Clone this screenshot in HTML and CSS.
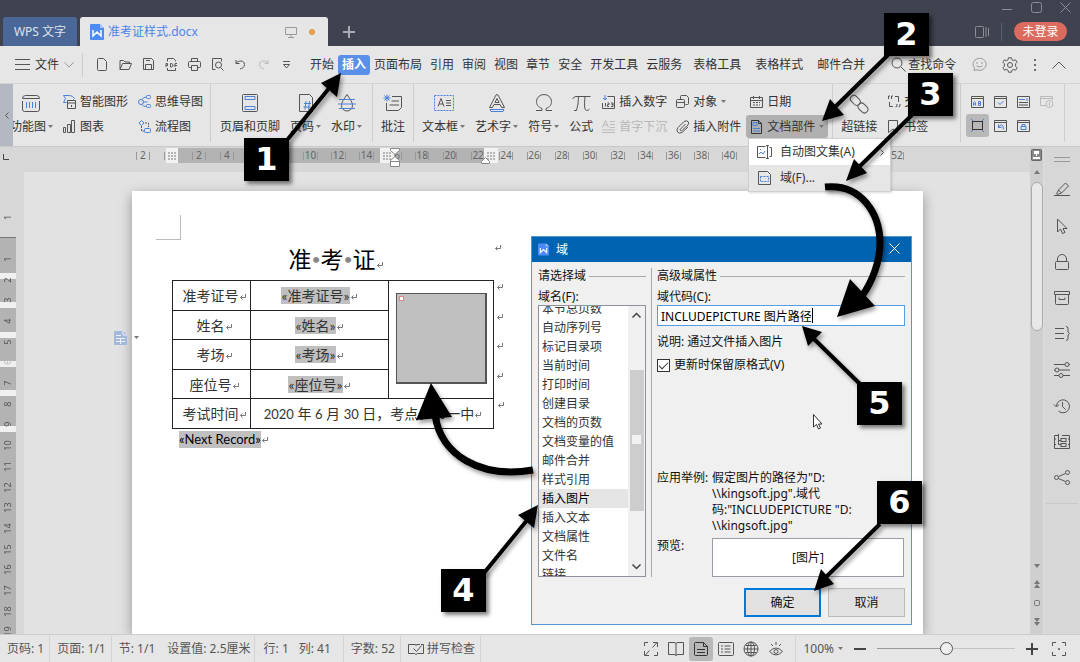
FILE: index.html
```html
<!DOCTYPE html>
<html lang="zh-CN">
<head>
<meta charset="utf-8">
<title>准考证样式.docx - WPS 文字</title>
<link rel="stylesheet" href="styles.css">
</head>
<body>
<svg class="defs" aria-hidden="true">
  <symbol id="caret" viewBox="0 0 5 4"><path d="M0 0h5L2.500 3z" fill="#777"/></symbol>
  <symbol id="ret" viewBox="0 0 8 8"><path d="M6.500 1v3.500H1.500M3.500 2.500l-2 2 2 2" fill="none" stroke="#777"/></symbol>
  <symbol id="wps" viewBox="0 0 14 16"><path d="M1 0h9l4 4v11a1 1 0 0 1-1 1H1a1 1 0 0 1-1-1V1a1 1 0 0 1 1-1z" fill="#4c8bf5"/><path d="M10 0v4h4z" fill="#a9c8fb"/><path d="M3 6v6l4-4 4 4V6" fill="none" stroke="#fff" stroke-width="1.500"/></symbol>
</svg>
<div class="app">
  <header class="titlebar">
    <button class="tab tab-home">WPS 文字</button>
    <div class="tab tab-doc">
      <svg width="14" height="16"><use href="#wps"/></svg>
      <span class="tab-name">准考证样式.docx</span>
      <svg width="12" height="12" class="line soft"><path d="M.5 1.500h11v7H.5zM6 8.500v3M3 11.500h6"/></svg>
      <span class="dot"></span>
    </div>
    <button class="new-tab" aria-label="新建"><svg width="12" height="12" class="line pale"><path d="M6 0v12M0 6h12" stroke-width="2"/></svg></button>
    <div class="title-right">
      <div class="win-buttons">
        <button aria-label="最小化"><svg width="11" height="11" class="line dim"><path d="M0 7.500h10"/></svg></button>
        <button aria-label="最大化"><svg width="11" height="11" class="line dim"><rect x=".5" y=".5" width="10" height="10" rx="2"/></svg></button>
        <button aria-label="关闭"><svg width="11" height="11" class="line dim"><path d="M.5.5l10 10M10.500.5l-10 10"/></svg></button>
      </div>
      <div class="account">
        <svg width="14" height="12" class="line dim"><rect x=".5" y=".5" width="8" height="11" rx="1"/><path d="M11 1v10M13.500 2v8"/></svg>
        <i class="bar"></i>
        <button class="login">未登录</button>
      </div>
    </div>
  </header>

  <div class="menubar">
    <button class="file"><svg width="15" height="11" class="line"><path d="M0 .5h15M0 5.500h15M0 10.500h15"/></svg><span>文件</span><svg width="10" height="6" class="line soft"><path d="M.5.5L5 5 9.500.5"/></svg></button>
    <div class="quick">
      <svg width="13" height="13" class="line"><path d="M1.500 1.500a1 1 0 0 1 1-1h5l3 3v8a1 1 0 0 1-1 1h-7a1 1 0 0 1-1-1z"/></svg>
      <svg width="13" height="13" class="line"><path d="M1 11.500v-9h3.500L6 4h4.500v1.500M1 11.500L3.500 5.500h9l-2.500 6z"/></svg>
      <svg width="13" height="13" class="line"><path d="M1.500.5h8l2 2v9h-10zM3.500 11.500V6.500h6v5M4 2.500h4"/></svg>
      <svg width="13" height="13" class="line"><path d="M2.500 3.500v-3h6l2 2v1M2.500 10v2.500h8V10"/><path d="M1 9V5.500h1.500v2H1M5.500 9V5.500h1L8 6.500V8L6.500 9zM10 9V5.500h2M10 7.500h2"/></svg>
      <svg width="13" height="13" class="line"><path d="M3.500 3.500v-3h6v3M3.500 9.500h-2a1 1 0 0 1-1-1v-4a1 1 0 0 1 1-1h10a1 1 0 0 1 1 1v4a1 1 0 0 1-1 1h-2M3.500 7.500h6v5h-6z"/></svg>
      <svg width="13" height="13" class="line"><path d="M4.500 11.500h-3v-11h9v3M12.500 12.500L9.500 9.500"/><circle cx="7.500" cy="7" r="3"/></svg>
      <svg width="13" height="13" class="line"><path d="M2 2v3.500h3.500M2 5.500C4 2 10.500 2 10.500 6.500c0 3-2.500 4-4.500 4.500"/></svg>
      <svg width="13" height="13" class="line faint"><path d="M11 2v3.500H7.500M11 5.500C9 2 2.500 2 2.500 6.500c0 3 2.500 4 4.500 4.500"/></svg>
      <svg width="13" height="13" class="line"><path d="M3 3.500h7M3.500 6.500h6l-3 3.500z"/></svg>
    </div>
    <nav class="tabs">
      <a href="#">开始</a><a href="#" class="on">插入</a><a href="#">页面布局</a><a href="#">引用</a><a href="#">审阅</a><a href="#">视图</a><a href="#">章节</a><a href="#">安全</a><a href="#">开发工具</a><a href="#">云服务</a><a href="#" class="ctx">表格工具</a><a href="#" class="ctx">表格样式</a><a href="#" class="ctx">邮件合并</a>
    </nav>
    <button class="find"><svg width="15" height="15" class="line"><circle cx="6" cy="6" r="5"/><path d="M9.500 9.500l5 5"/></svg><span>查找命令</span></button>
    <div class="menu-right">
      <svg width="15" height="15" class="line soft"><path d="M2 13.500l.5-2.500A6.500 6 0 1 1 5 12.800z"/><path d="M5 5v2M10 5v2M4.500 9q3 2 6 0"/></svg>
      <svg width="16" height="16" class="line"><circle cx="8" cy="8" r="2.500"/><path d="M6.500.8h3l.5 2 1.500.8 2-.8 1.600 2.500-1.500 1.500v2.400l1.500 1.500-1.600 2.500-2-.8-1.500.8-.5 2h-3l-.5-2-1.500-.8-2 .8L.9 10.700l1.500-1.500V6.800L.9 5.300l1.600-2.500 2 .8L6 2.800z"/></svg>
      <svg width="4" height="14"><g fill="#444"><circle cx="2" cy="2" r="1"/><circle cx="2" cy="7" r="1"/><circle cx="2" cy="12" r="1"/></g></svg>
      <svg width="14" height="8" class="line"><path d="M.5 7.500L7 1l6.500 6.500"/></svg>
    </div>
  </div>

  <div class="ribbon">
    <button class="scroller" aria-label="向左滚动"><svg width="4" height="7" class="line"><path d="M3.500.5l-3 3 3 3"/></svg></button>
    <div class="group first">
      <button class="big clip"><svg width="20" height="18" class="line"><path d="M1.500 4.500q0-3 3-3h11q3 0 3 3zM1.500 7v8q0 2.500 2 2.500h13q2 0 2-2.500V7"/><path d="M5.500 8v6M8.500 8v6M11.500 8v6M14.500 8v6" class="blue"/></svg><span>功能图<svg width="5" height="4"><use href="#caret"/></svg></span></button>
      <div class="stack">
        <button><svg width="13" height="14" class="line"><path d="M.5.5h6q3 0 5 3l-1 1M.5.5l2 3-2 4h3" class="blue"/><path d="M4.500 5.500h8v8h-8zM4.500 8h8M8.500 10v2"/></svg>智能图形</button>
        <button><svg width="13" height="13" class="line"><path d="M.5 7.500h2v5h-2zM4.500 4.500h3v8h-3zM8.500.5h3v12h-3z"/></svg>图表</button>
      </div>
      <div class="stack">
        <button><svg width="13" height="13" class="line"><g class="blue"><circle cx="3" cy="7" r="2.500"/><rect x="8.500" y=".5" width="4" height="3" rx="1"/><rect x="8.500" y="9.500" width="4" height="3" rx="1"/><path d="M4 4.500q1-2.500 4.500-2.500M5.500 7h4M4 9.500q1 2 4.500 2"/></g></svg>思维导图</button>
        <button><svg width="13" height="13" class="line"><path d="M3.500.5l2.500 2.500-2.500 2.500L1 3z" class="blue"/><path d="M7 3h3.500v4M3.500 6v5H6" stroke-dasharray="2 1"/><rect x="6.500" y="8.500" width="6" height="4" rx="1" class="blue"/></svg>流程图</button>
      </div>
    </div>
    <div class="group">
      <button class="big"><svg width="18" height="18" class="line"><rect x="1.500" y=".5" width="15" height="17" rx="1"/><path d="M4 2.500h10v3H4zM4 12.500h10v3H4z" class="blue"/></svg><span>页眉和页脚</span></button>
      <button class="big"><svg width="18" height="18" class="line"><path d="M2.500.5h10l3 3v14h-13z"/><path d="M7 9.500h7M6.500 13h7M9 7l-1 8.500M12.500 7l-1 8.500" class="blue"/></svg><span>页码<svg width="5" height="4"><use href="#caret"/></svg></span></button>
      <button class="big"><svg width="18" height="18" class="line"><path d="M9 .5C6 5 3.500 8 3.500 11.500a5.500 5.500 0 0 0 11 0C14.500 8 12 5 9 .5z"/><path d="M1 5.500h16M0 10h18M1 14.500h16" class="blue"/></svg><span>水印<svg width="5" height="4"><use href="#caret"/></svg></span></button>
    </div>
    <div class="group one">
      <button class="big"><svg width="20" height="18" class="line"><path d="M9 2.500h9.500v11l-3 3h-12V9M8.500 7H16M6.500 11H16"/><path d="M4 .5v7M.5 4h7M1.500 1.500l5 5M6.500 1.500l-5 5" class="blue"/></svg><span>批注</span></button>
    </div>
    <div class="group text">
      <div class="set">
        <button class="big"><svg width="20" height="18" class="line"><rect x=".5" y="1.500" width="19" height="15" class="blue" stroke-dasharray="2 1"/><path d="M4 12.500l3-8 3 8M5 10h4M12 6.500h5M12 9h5M12 11.500h5"/></svg><span>文本框<svg width="5" height="4"><use href="#caret"/></svg></span></button>
        <button class="big"><svg width="18" height="18" class="line"><path d="M1.500 13.500L8 1q1-1 2 0l6.500 12.500h-3l-1.500-3H6l-1.500 3zM7 8.500h4L9 4.500z"/><path d="M2 15.500h14l-1 2H3z" class="blue"/></svg><span>艺术字<svg width="5" height="4"><use href="#caret"/></svg></span></button>
        <button class="big"><svg width="18" height="18" class="line"><path d="M1 16.500h6v-2C3 13 1.500 10.500 1.500 7.500a7.500 7 0 0 1 15 0c0 3-1.500 5.500-5.500 7v2h6"/></svg><span>符号<svg width="5" height="4"><use href="#caret"/></svg></span></button>
        <button class="big"><svg width="19" height="18" class="line"><path d="M.5 5Q2 2.500 4 2.500h14.500M6.500 2.500q0 8-2 14H2M13 2.500q-1.500 14 1.500 14 2 0 3-1.500"/></svg><span>公式</span></button>
      </div>
      <div class="stack">
        <button><svg width="13" height="14" class="line"><path d="M5.500 1.500h7v12H.5V8"/><path d="M3 0v5M1 3l2 2 2-2" class="blue"/><path d="M3.500 8v3.500M5.500 8H7v1.500H5.500V11.500H7M9 8h2v3.500H9M9.500 9.500H11"/></svg>插入数字</button>
        <button disabled><svg width="13" height="13" class="line faint"><path d="M.5 7.500l3-7 3 7M1.500 5h4M8 1.500h5M8 4.500h5M8 7.500h5M0 10h13M0 12.500h13"/></svg>首字下沉</button>
      </div>
      <div class="stack">
        <button><svg width="13" height="13" class="line"><path d="M4.500 5V1.500a1 1 0 0 1 1-1h5l2 2v6a1 1 0 0 1-1 1H9.500"/><rect x=".5" y="4.500" width="8" height="8" rx="1"/><path d="M.5 7.500h8"/></svg>对象<svg class="end" width="5" height="4"><use href="#caret"/></svg></button>
        <button><svg width="13" height="13" class="line"><path d="M9.500 4L4.500 9q-1 1 0 1.500t2-.5L12 5q1.500-2 0-3.500t-4 0L2 7.500q-2 2.500-.5 4.500t4.500.5L12 7"/></svg>插入附件</button>
      </div>
      <div class="stack">
        <button><svg width="13" height="12" class="line"><path d="M.5 1.500h12v10H.5zM.5 4.500h12M3.500 0v3M9.500 0v3"/><path d="M3 6.500h7M3 9h7" stroke-dasharray="2 1"/></svg>日期</button>
        <button class="pressed"><svg width="13" height="14" class="line dark"><path d="M1.500.5h7l3 3v10h-10z"/><path d="M8.500.5v3h3"/><path d="M3 2.500h4v3H3zM3 8.500h7M3 11h7" class="blue"/></svg>文档部件<svg class="end" width="5" height="4"><use href="#caret"/></svg></button>
      </div>
    </div>
    <div class="group one">
      <button class="big"><svg width="20" height="20" class="line"><rect x="-5" y="-3.500" width="11" height="7" rx="3.500" transform="translate(6 6) rotate(45)"/><rect x="-5.500" y="-3.500" width="11" height="7" rx="3.500" transform="translate(14 14) rotate(45)"/></svg><span>超链接</span></button>
      <div class="stack">
        <button><svg width="13" height="13" class="line"><path d="M1.500 4V1H3M4.500 4V1H6M8 1.500h3.500V7M2.500 7v4.500H6M8.500 12q2 0 1.500-3M11.500 12q2 0 1.500-3"/></svg>交叉引用</button>
        <button><svg width="13" height="13" class="line"><path d="M1.500.5h9v12L6 9l-4.500 3.500z"/></svg>书签</button>
      </div>
    </div>
    <div class="group controls">
      <button aria-label="文字型窗体域"><svg width="13" height="12" class="line"><path d="M.5.5h12v11H.5zM.5 2.500h12"/><path d="M2.500 9.500v-3l1-1 1 1v3M2.500 8h2M7.500 5.500h2v4h-2zM7.500 7.500h2" class="blue"/></svg></button>
      <button aria-label="复选框窗体域"><svg width="13" height="12" class="line"><path d="M.5.5h12v11H.5zM.5 2.500h12"/><path d="M4 6.500l2 2 3.500-3.500" class="blue"/></svg></button>
      <button aria-label="下拉型窗体域"><svg width="13" height="12" class="line"><path d="M.5.5h12v11H.5z"/><path d="M2 3.500h6M10 2v3" class="blue"/><path d="M2 6.500h9M2 9h9"/></svg></button>
      <button aria-label="窗体域选项"><svg width="13" height="12" class="line faint"><path d="M12.500 4V.5H.5v9H6M.5 2.500h12"/><circle cx="9.500" cy="8" r="3.500"/><path d="M9.500 6v4"/></svg></button>
      <button class="sel" aria-label="窗体域底纹"><svg width="13" height="13" class="line dark"><rect x="1.500" y="2.500" width="10" height="8"/><path d="M0 0l2 2M13 0l-2 2M0 13l2-2M13 13l-2-2" class="blue"/></svg></button>
      <button aria-label="重新设置窗体域"><svg width="13" height="12" class="line"><path d="M.5.5h12v11H.5zM.5 2.500h12"/><path d="M4.500 4.500v3h3M4.500 7.500q1-2.500 3-2.500t2 4.500" class="blue"/></svg></button>
      <button aria-label="保护窗体"><svg width="13" height="12" class="line"><path d="M.5.5h12v11H.5zM.5 2.500h12"/><path d="M4 6.500h5v3H4zM5 6V4.500h3V6" class="blue"/></svg></button>
    </div>
  </div>

  <main class="work">
    <div class="canvas-col">
      <div class="hruler">
        <svg class="corner" width="7" height="7"><path d="M1.500 0v5.500H7" fill="none" stroke="#444"/></svg>
        <div class="hscale"><span>2</span><span></span><span>2</span><span>4</span><span></span><span></span><span>10</span><span>12</span><span>14</span><span>16</span><span>18</span><span>20</span><span>22</span><span>24</span><span>26</span><span>28</span><span>30</span><span>32</span><span>34</span><span>36</span><span>38</span><span>40</span><span></span><span></span><span></span><span></span><span></span><span>52</span></div>
        <svg class="markers" width="340" height="20">
          <path d="M0 0h12v15H0zM214 0h14v15h-14zM318 0h14v15h-14z" fill="#f2f2f2"/>
          <path d="M2 5h8M2 8h8M2 11h8M217 5h8M217 8h8M217 11h8M321 5h8M321 8h8M321 11h8" stroke="#777" stroke-dasharray="2 1"/>
          <path d="M224.500.5h9v2l-4.500 4-4.500-4zM224.500 12.500l4.500-4 4.500 4v6h-9zM224.500 13.500h9M315.500 15.500v-2l4-4 4 4v2z" fill="#fff" stroke="#888"/>
        </svg>
      </div>
      <div class="stage">
        <div class="vruler"><span class="v0">1</span><div class="vscale"><span>1</span><span>2</span><span>3</span><span>4</span><span>5</span><span class="hid">6</span><span>7</span><span>8</span><span>9</span><span>10</span><span>11</span><span>12</span><span>13</span><span>14</span><span>15</span><span>16</span><span>17</span><span>18</span><span>19</span></div></div>
        <div class="desk">
          <div class="para-tool"><svg width="13" height="14"><path d="M0 0h9l4 4v10H0z" fill="#a3b9dc"/><path d="M9 0v4h4M2 4.500h5M2 7.500h9M2 10.500h9M6.500 7v6" fill="none" stroke="#eef"/></svg><svg width="5" height="4"><use href="#caret"/></svg></div>
          <article class="page">
            <i class="crop"></i>
            <div class="title-row"><h1>准<i>•</i>考<i>•</i>证<svg width="8" height="8"><use href="#ret"/></svg></h1><svg width="8" height="8"><use href="#ret"/></svg></div>
            <table class="ticket">
              <colgroup><col class="c1"><col class="c2"><col class="c3"><col class="c4"></colgroup>
              <tr><th>准考证号<svg width="8" height="8"><use href="#ret"/></svg></th><td><mark>«准考证号»</mark><svg width="8" height="8"><use href="#ret"/></svg></td><td rowspan="4" class="photo-cell"><div class="photo"><i></i></div></td><td class="eol"><svg width="8" height="8"><use href="#ret"/></svg></td></tr>
              <tr><th>姓名<svg width="8" height="8"><use href="#ret"/></svg></th><td><mark>«姓名»</mark><svg width="8" height="8"><use href="#ret"/></svg></td><td class="eol"><svg width="8" height="8"><use href="#ret"/></svg></td></tr>
              <tr><th>考场<svg width="8" height="8"><use href="#ret"/></svg></th><td><mark>«考场»</mark><svg width="8" height="8"><use href="#ret"/></svg></td><td class="eol"><svg width="8" height="8"><use href="#ret"/></svg></td></tr>
              <tr><th>座位号<svg width="8" height="8"><use href="#ret"/></svg></th><td><mark>«座位号»</mark><svg width="8" height="8"><use href="#ret"/></svg></td><td class="eol"><svg width="8" height="8"><use href="#ret"/></svg></td></tr>
              <tr><th>考试时间<svg width="8" height="8"><use href="#ret"/></svg></th><td colspan="2" class="when"><b>2020</b> 年 <b>6</b> 月 <b>30</b> 日，考点：市一中<svg width="8" height="8"><use href="#ret"/></svg></td><td class="eol"><svg width="8" height="8"><use href="#ret"/></svg></td></tr>
            </table>
            <p class="next"><mark>«Next Record»</mark><svg width="8" height="8"><use href="#ret"/></svg></p>
          </article>
        </div>
      </div>
    </div>
    <div class="vscroll">
      <svg width="11" height="12"><rect x=".5" y=".5" width="10" height="11" rx="1" fill="#888" stroke="#666"/><path d="M3 2h5v3H3zM5 5h1v2H5zM2 8h7v2H2z" fill="#fff"/></svg>
      <svg width="6" height="4" class="up"><path d="M0 4l3-4 3 4z" fill="#777"/></svg>
      <div class="thumb"></div>
      <div class="jumps">
        <svg width="6" height="4"><path d="M0 0l3 4 3-4z" fill="#777"/></svg>
        <svg width="6" height="8"><path d="M0 4l3-4 3 4zM0 8l3-4 3 4z" fill="#777"/></svg>
        <svg width="6" height="6"><rect x=".5" y=".5" width="5" height="5" rx="1" fill="none" stroke="#777"/></svg>
        <svg width="6" height="8"><path d="M0 0l3 4 3-4zM0 4l3 4 3-4z" fill="#777"/></svg>
      </div>
    </div>
    <aside class="side">
      <svg width="16" height="5" class="line soft"><path d="M0 .5h16M0 4.500h16"/></svg>
      <div class="side-tools">
        <svg width="16" height="16" class="line"><path d="M0 13.500h16M2.500 12l2-4 7-7 3 3-7 7-4 1.500zM4.500 8l3 3"/></svg>
        <svg width="16" height="16" class="line"><path d="M3.500 1v13l3-3 2 4.500 2.500-1-2-4h4z"/></svg>
        <svg width="16" height="16" class="line"><rect x="1.500" y="7.500" width="13" height="8" rx="1"/><path d="M3.500 7.500V5a4.500 4.500 0 0 1 9 0v2.500"/></svg>
        <svg width="16" height="16" class="line"><path d="M.5 1.500h15v3H.5zM1.500 4.500v9q0 1 1 1h11q1 0 1-1v-9M5 7.500v2h6v-2"/></svg>
        <svg width="16" height="16" class="line"><path d="M1 2.500h9M1 7.500h9M1 12.500h9M12 .5q2 0 2 2V6l1.500 1.500L14 9v3.500q0 2-2 2"/></svg>
        <svg width="16" height="16" class="line"><path d="M0 2.500h11M15 2.500h1M0 8h1M5 8h11M0 13.500h5M9 13.500h7"/><circle cx="13" cy="2.500" r="2"/><circle cx="3" cy="8" r="2"/><circle cx="7" cy="13.500" r="2"/></svg>
        <svg width="16" height="16" class="line"><path d="M2.500 8a6.500 6.500 0 1 1 2 5M0 6.500l2.500 2.500L5 6.500M8.500 4v4.500l3 3"/></svg>
        <svg width="16" height="16" class="line"><path d="M4 1.500H.5v13h15v-13H8M4.500 0v10.500H7M4.500 6.500H7M0 5h2M0 10.500h2M14 5h2M14 10.500h2"/><rect x="7" y="4.500" width="5" height="3"/><rect x="7" y="9.500" width="5" height="3"/></svg>
        <svg width="16" height="16" class="line"><circle cx="2.500" cy="7.500" r="2"/><circle cx="13.500" cy="2.500" r="2"/><circle cx="13.500" cy="12.500" r="2"/><path d="M4.500 6.500l7-3M4.500 8.500l7 3"/></svg>
      </div>
    </aside>
  </main>

  <footer class="status">
    <span>页码: 1</span><span class="sep">页面: 1/1</span><span class="sep">节: 1/1</span><span class="wide">设置值: 2.5厘米</span><span class="sep">行: 1</span><span class="col">列: 41</span><span class="sep far">字数: 52</span><span class="sep"><svg width="16" height="12" class="line"><path d="M12 1.500H9Q8 1.500 8 2.500 8 1.500 7 1.500H.5v9H6.500L8 11.500l1.500-1h6V1.500H13M5.500 5.500l3 3 5-6"/></svg>拼写检查</span><i class="sep"></i>
    <div class="views">
      <button aria-label="全屏"><svg width="16" height="16" class="line"><path d="M1.500 5V1.500H5M10 1.500h4.500V6M14.500 11v3.500H11M6 14.500H1.500V10M9.500 6.500l4.500-5M6.500 9.500l-4.500 5"/></svg></button>
      <button aria-label="阅读版式"><svg width="16" height="16" class="line"><path d="M8 2.500v12M8 2.500q-1-1-2-1H.5v12H6q1 0 2 1 1-1 2-1h5.500v-12H10q-1 0-2 1z"/></svg></button>
      <button class="sel" aria-label="页面视图"><svg width="16" height="16" class="line dark"><path d="M1.500 2.500q0-1 1-1h8l4 4v8q0 1-1 1h-11q-1 0-1-1zM10.500 1.500v4h4M4 8.500h8M4 11.500h8"/></svg></button>
      <button aria-label="大纲"><svg width="16" height="16" class="line"><rect x=".5" y="1.500" width="15" height="13" rx="1"/><path d="M3 5h2M3 8h2M3 11h2M6.500 5h6M6.500 8h6M6.500 11h6"/></svg></button>
      <button aria-label="Web 版式"><svg width="16" height="16" class="line"><circle cx="8" cy="8" r="7"/><ellipse cx="8" cy="8" rx="3.500" ry="7"/><path d="M8 1v14M1 8h14M2.500 4.500h11M2.500 11.500h11"/></svg></button>
      <button aria-label="护眼模式"><svg width="16" height="16" class="line"><path d="M1.500 10.500Q8 3.500 14.500 10.500 8 17.500 1.500 10.500zM8 1v3M3 3l2 2M13 3l-2 2"/><circle cx="8" cy="10.500" r="2"/></svg></button>
    </div>
    <button class="zoomv sep">100%<svg width="5" height="4"><use href="#caret"/></svg></button>
    <button class="pm" aria-label="缩小"><svg width="12" height="12"><path d="M0 6h12" stroke="#444" stroke-width="2"/></svg></button>
    <input type="range" class="zoom" min="0" max="100" value="50" aria-label="缩放">
    <button class="pm" aria-label="放大"><svg width="12" height="12"><path d="M0 6h12M6 0v12" stroke="#444" stroke-width="2"/></svg></button>
    <button class="pm last" aria-label="最佳显示比例"><svg width="14" height="14" class="line"><path d="M.5 4V.5H4M10 .5h3.500V4M13.500 10v3.500H10M4 13.500H.5V10M6 7h2M7 6v2"/></svg></button>
  </footer>

  <div class="dropdown">
    <button><svg width="15" height="14" class="line"><path d="M8.500 1.500h-8v11h8M10.500.5v13M9 .5h3M9 13.500h3M12.500 2.500h2v9h-2"/><path d="M2 9l2-2 2 2 2-3M3 4.500h1" class="blue"/></svg><span>自动图文集(A)</span><svg width="4" height="7" class="line"><path d="M.5.5l3 3-3 3"/></svg></button>
    <button class="hover"><svg width="15" height="14" class="line"><path d="M1.500.5h9l3 3v10h-12z"/><path d="M3.500 5.500h8v5h-8z" class="blue" stroke-dasharray="2 1"/></svg><span>域(F)...</span></button>
  </div>

  <section class="dialog" role="dialog" aria-label="域">
    <header><svg width="11" height="13" viewBox="0 0 14 16"><use href="#wps"/></svg><span>域</span><button aria-label="关闭"><svg width="11" height="11" fill="none" stroke="#fff"><path d="M.5.5l10 10M10.500.5l-10 10"/></svg></button></header>
    <div class="dlg-body">
      <div class="dlg-left">
        <div class="legend">请选择域</div>
        <div class="lbl" id="names">域名(F):</div>
        <div class="listbox">
          <ul role="listbox" aria-labelledby="names">
            <li role="option">本节总页数</li><li role="option">自动序列号</li><li role="option">标记目录项</li><li role="option">当前时间</li><li role="option">打印时间</li><li role="option">创建目录</li><li role="option">文档的页数</li><li role="option">文档变量的值</li><li role="option">邮件合并</li><li role="option">样式引用</li><li role="option" aria-selected="true" class="on">插入图片</li><li role="option">插入文本</li><li role="option">文档属性</li><li role="option">文件名</li><li role="option">链接</li>
          </ul>
          <div class="lb-scroll">
            <svg width="9" height="6"><path d="M.5 5.500l4-4 4 4" fill="none" stroke="#444" stroke-width="1.500"/></svg>
            <div class="lb-thumb"><i></i></div>
            <svg width="9" height="6"><path d="M.5.5l4 4 4-4" fill="none" stroke="#444" stroke-width="1.500"/></svg>
          </div>
        </div>
      </div>
      <div class="dlg-right">
        <div class="legend">高级域属性</div>
        <label class="lbl" for="code">域代码(C):</label>
        <div class="code-field"><input id="code" type="text" value="INCLUDEPICTURE 图片路径"><i class="text-caret"></i></div>
        <p class="note">说明: 通过文件插入图片</p>
        <label class="check"><input type="checkbox" checked><span>更新时保留原格式(V)</span></label>
        <dl>
          <dt>应用举例:</dt><dd>假定图片的路径为"D:<br>\\kingsoft.jpg".域代<br>码:"INCLUDEPICTURE "D:<br>\\kingsoft.jpg"</dd>
          <dt>预览:</dt><dd class="preview">[图片]</dd>
        </dl>
      </div>
    </div>
    <div class="actions"><button class="ok">确定</button><button>取消</button></div>
  </section>

  <svg class="notes" viewBox="0 0 1080 662" width="1080" height="662" aria-hidden="true">
    <path d="M813.500 414.500v12.500l3-2.500 2 4.500 2-1-2-4h3.500z" fill="#fff" stroke="#333"/>
    <g class="shade">
      <g stroke="#000" stroke-width="4" fill="none">
        <path d="M288 139L330 87M888 55L834 108M912 115L858 168M484 573L528 519M860 384L812 337M880 524L825 578"/>
        <path d="M825 187C862 183 880 215 880 243 880 262 872 282 862 296" stroke-width="7"/>
        <path d="M533 470C480 479 441 455 435 415" stroke-width="7"/>
      </g>
      <path d="M341 73L321 83 337 97zM822 121L830 99 844 115zM846 181L854 159 867 173zM538 505L518 515 534 528zM802 326L822 332 808 346zM814 591L821 569 834 584zM837 317L850 279 875 306zM431 383L416 420 452 417z"/>
    </g>
  </svg>
  <b class="badge b1">1</b><b class="badge b2">2</b><b class="badge b3">3</b><b class="badge b4">4</b><b class="badge b5">5</b><b class="badge b6">6</b>
</div>
</body>
</html>
```
FILE: styles.css
```css
* { box-sizing: border-box; }
body { margin: 0; font: 12px/16px "Noto Sans", "Noto Sans CJK SC", sans-serif; color: #333; background: #e6e6e6; }
button { font: inherit; color: inherit; background: none; border: 0; padding: 0; white-space: nowrap; }
input { font: inherit; }
svg { flex: none; overflow: visible; }
.defs { position: absolute; width: 0; height: 0; }
.line { fill: none; stroke: #555; }
.line .blue { stroke: #4a80d8; }
.dark { stroke: #333; }
.soft { stroke: #999; }
.faint { stroke: #bbb; }
.pale { stroke: #a8abb3; }
.dim { stroke: #8a8e99; }

.app { position: relative; display: flex; flex-direction: column; height: 100vh; min-width: 1080px; overflow: hidden; }

/* title bar */
.titlebar { display: flex; align-items: flex-end; height: 46px; padding-left: 3px; background: #3f434f; flex: none; }
.tab { height: 29px; border-radius: 3px 3px 0 0; display: flex; align-items: center; }
.tab-home { width: 74px; justify-content: center; background: #4a6797; color: #dde3ee; }
.tab-doc { width: 248px; margin-left: 3px; padding: 0 13px 0 10px; gap: 4px; background: #e6e6e6; color: #4c84e8; }
.tab-name { flex: 1; }
.dot { width: 6px; height: 6px; margin-left: 8px; border-radius: 50%; background: #ea9a4c; }
.new-tab { width: 42px; height: 29px; display: grid; place-items: center; }
.title-right { margin-left: auto; display: flex; flex-direction: column; align-items: flex-end; }
.win-buttons { display: flex; gap: 18px; padding-right: 9px; height: 17px; }
.account { display: flex; align-items: center; height: 29px; padding: 0 13px 0 0; }
.bar { width: 1px; height: 18px; margin: 0 12px; background: #595e6b; }
.login { width: 53px; height: 19px; border-radius: 10px; background: #db6b5e; color: #fff; line-height: 18px; }

/* menu bar */
.menubar { display: flex; align-items: center; height: 38px; flex: none; background: #e6e6e6; border-bottom: 1px solid #d4d4d4; }
.file { display: flex; align-items: center; gap: 7px; height: 24px; padding: 0 8px 0 15px; border-right: 1px solid #ccc; }
.file span { margin: 0 -2px; }
.quick { display: flex; gap: 10px; padding: 0 13px 0 13px; }
.tabs { display: flex; align-items: center; }
.tabs a { padding: 2px 4px; border-radius: 3px; color: inherit; text-decoration: none; white-space: nowrap; }
.tabs a.ctx { padding: 2px 7px; }
.tabs a.on { background: #5b90ea; color: #fff; font-weight: bold; }
.find { display: flex; align-items: center; gap: 2px; margin-left: 19px; }
.menu-right { display: flex; align-items: center; gap: 15px; margin-left: auto; padding-right: 14px; }

/* ribbon */
.ribbon { display: flex; height: 62px; flex: none; background: #e6e6e6; }
.scroller { width: 13px; background: #b3b8c3; }
.group { display: flex; gap: 10px; padding: 10px 10px 0 9px; margin-bottom: 4px; border-right: 1px solid #cdcdcd; }
.group.first { padding: 10px 7px 0 0; }
.group.one { padding: 10px 8px 0; }
.group.text { gap: 9px; padding: 10px 8px 0 8px; }
.set { display: flex; gap: 10px; }
.big { display: flex; flex-direction: column; align-items: center; justify-content: space-between; height: 41px; }
.big > svg { height: 19px; }
.big span { display: flex; align-items: center; gap: 2px; }
.big.clip { width: 40px; overflow: hidden; align-items: flex-end; }
.big.clip > svg { margin-right: 12px; }
.stack { display: flex; flex-direction: column; gap: 1px; margin-top: -4px; }
.stack button { display: flex; align-items: center; gap: 4px; height: 23px; }
.stack button + button { margin-top: 1px; }
.stack button:disabled { color: #b8b8b8; }
.stack .pressed { margin-left: -4px; margin-right: -4px; padding: 0 4px; background: #b0b0b0; border-radius: 3px; }
.group.controls { display: grid; grid-template-columns: repeat(4, 23px); grid-template-rows: 23px 23px; gap: 1px 0; padding: 6px 6px 0 5px; }
.controls button { display: grid; place-items: center; border-radius: 3px; }
.controls .sel, .views .sel { background: #b8b8b8; }

/* workspace */
.work { display: flex; flex: 1; min-height: 0; border-top: 1px solid #c8c8c8; background: #d7d7d7; }
.canvas-col { flex: 1; min-width: 0; display: flex; flex-direction: column; }
.hruler { position: relative; height: 25px; padding: 1px 0 9px 129px; color: #666; font-size: 10px; line-height: 15px; flex: none; }
.hscale { width: 782px; display: grid; grid-template-columns: repeat(28, 1fr); text-align: center; background: linear-gradient(90deg, transparent 49px, #b3b3b3 49px 355px, transparent 355px); }
.hscale span { height: 15px; background: linear-gradient(#999, #999) 25% 60%/1px 8px no-repeat, linear-gradient(#999, #999) 75% 60%/1px 8px no-repeat; }
.markers { position: absolute; left: 166px; top: 1px; }
.corner { position: absolute; left: 2px; top: 7px; }
.stage { flex: 1; min-height: 0; display: flex; }
.vruler { width: 16px; display: flex; flex-direction: column; align-items: center; overflow: hidden; color: #555; font-size: 9px; line-height: 16px; background: linear-gradient(transparent 65px, #777 65px 66px, #b3b3b3 66px 101px, #f0f0f0 101px 107px, #b3b3b3 107px 130px, #f0f0f0 130px 136px, #b3b3b3 136px 160px, #f0f0f0 160px 166px, #b3b3b3 166px 189px, #f0f0f0 189px 195px, #b3b3b3 195px 218px, #f0f0f0 218px 224px, #b3b3b3 224px 254px, #f0f0f0 254px 260px, #b3b3b3 260px); }
.vruler span { writing-mode: vertical-rl; transform: rotate(180deg); text-align: center; }
.v0 { height: 21px; margin: 35px 0 21px; flex: none; }
.vscale { display: grid; grid-template-rows: repeat(19, 1fr); height: 393px; flex: none; }
.hid { color: #bbb; }
.desk { position: relative; flex: 1; margin-left: 8px; padding: 19px 107px 0 108px; background: #e2e2e2; overflow: hidden; }
.page { height: 100%; padding: 24px 24px 0; background: #fff; box-shadow: 0 4px 12px rgba(0, 0, 0, .35); }
.para-tool { position: absolute; left: 90px; top: 159px; display: flex; align-items: center; gap: 7px; }
.crop { display: block; width: 25px; height: 25px; border: solid #bbb; border-width: 0 1px 1px 0; }
.title-row { display: flex; width: 330px; height: 40px; margin: 0 0 0 16px; padding-top: 4px; }
h1 { flex: 1; margin: 0; padding: 0 0 5px 6px; display: flex; justify-content: center; align-items: flex-end; font: 23px/32px "Lato", "Noto Sans CJK SC", sans-serif; color: #000; }
h1 i { width: 9px; font-size: 16px; line-height: 32px; font-style: normal; color: #888; text-align: center; }
h1 svg { margin-bottom: 6px; }
.ticket { width: 332px; margin-left: 16px; table-layout: fixed; border-collapse: collapse; font: 14px/17px "Lato", "Noto Sans CJK SC", sans-serif; color: #333; }
.ticket tr { height: 29px; }
.ticket tr:nth-child(odd) { height: 30px; }
.c1 { width: 78px; } .c2 { width: 138px; } .c3 { width: 105px; } .c4 { width: 11px; }
.ticket th, .ticket td { padding: 0; border: 1px solid #222; font-weight: 400; text-align: center; white-space: nowrap; }
.ticket th { padding-left: 6px; }
.ticket td.eol { border: 0; text-align: right; line-height: 10px; vertical-align: top; }
.ticket td.when { padding-left: 2px; }
.when b { font-size: 13px; font-weight: 400; }
mark { display: inline-block; background: #c0c0c0; color: inherit; }
.photo { width: 91px; height: 91px; margin: -2px auto 0; padding: 2px; background: #c0c0c0; border: solid #555; border-width: 1px 2px 2px 1px; }
.photo i { display: block; width: 5px; height: 5px; background: #fff; border: 1px solid #d88; }
.next { margin: 2px 0 0 23px; font: 13px/17px "Lato", sans-serif; color: #000; }

.vscroll { width: 14px; display: flex; flex-direction: column; align-items: center; padding: 2px 0 8px; background: #cfcfcf; border-right: 1px solid #dedede; }
.up { margin: 9px 0 8px; }
.thumb { width: 12px; height: 149px; border: 1px solid #aaa; border-radius: 6px; background: #e8e8e8; }
.jumps { margin-top: auto; display: flex; flex-direction: column; align-items: center; gap: 12px; }
.side { width: 36px; display: flex; flex-direction: column; align-items: center; padding-top: 10px; }
.side-tools { display: flex; flex-direction: column; align-items: center; gap: 20px; margin-top: 20px; padding: 0 8px 17px; border-bottom: 1px solid #c8c8c8; }

/* status bar */
.status { display: flex; align-items: center; height: 28px; flex: none; padding-left: 7px; color: #555; background: #e6e6e6; border-top: 1px solid #ccc; }
.status > span { display: flex; align-items: center; gap: 3px; height: 26px; margin-right: 5px; white-space: nowrap; }
.status > .sep { border-left: 1px solid #d4d4d4; padding-left: 7px; height: 26px; }
.status > .wide { margin: 0 3px 0 7px; }
.status > .wide + span { padding-left: 9px; }
.status > .col { padding-left: 5px; }
.status > .far { margin-left: 7px; }
.views { display: flex; gap: 1px; margin-left: auto; margin-right: 7px; }
.views button { display: grid; place-items: center; width: 24px; height: 24px; border-radius: 3px; }
.zoomv { display: flex; align-items: center; gap: 4px; }
.pm { display: grid; place-items: center; margin-left: 11px; }
.pm.last { margin: 0 14px 0 14px; }
.zoom { appearance: none; width: 138px; height: 14px; margin: 0 0 0 11px; background: linear-gradient(90deg, #999 50%, #c4c4c4 50%) center/100% 1px no-repeat; }
.zoom::-webkit-slider-thumb { appearance: none; width: 13px; height: 13px; border: 1px solid #555; border-radius: 50%; background: #eee; }

/* drop-down menu */
.dropdown { position: absolute; left: 748px; top: 138px; width: 143px; border: 1px solid #d0d0d0; background: #fff; box-shadow: 1px 1px 2px rgba(0, 0, 0, .15); }
.dropdown button { display: flex; align-items: center; width: 100%; height: 26px; padding: 0 6px 0 8px; gap: 8px; text-align: left; }
.dropdown span { flex: 1; }
.dropdown .hover { background: #e6e6e6; }

/* dialog */
.dialog { position: absolute; left: 531px; top: 236px; width: 381px; border: 1px solid #5596cf; background: #f0f0f0; color: #111; }
.dialog header { display: flex; align-items: center; gap: 7px; height: 25px; padding: 0 11px 0 6px; background: #0063b1; color: #fff; }
.dialog header span { flex: 1; }
.dlg-body { display: flex; gap: 5px; height: 309px; padding: 0 6px; margin-top: 6px; }
.dlg-left { width: 108px; display: flex; flex-direction: column; }
.dlg-right { flex: 1; display: flex; flex-direction: column; padding-left: 5px; border-left: 1px solid #aaa; }
.legend { display: flex; align-items: center; gap: 3px; height: 16px; }
.legend::after { content: ""; flex: 1; height: 1px; background: #aaa; }
.lbl { display: block; margin: 5px 0 0; }
.listbox { flex: 1; min-height: 0; display: flex; border: 1px solid #8d929c; background: #fff; overflow: hidden; }
.listbox ul { flex: 1; margin: -7px 0 0; padding: 0; list-style: none; color: #333; }
.listbox li { height: 19px; padding-left: 3px; line-height: 19px; }
.listbox .on { background: #e5e5e5; color: #000; }
.lb-scroll { width: 17px; display: flex; flex-direction: column; align-items: center; padding: 6px 2px; background: #f0f0f0; }
.lb-thumb { width: 14px; height: 141px; margin: 52px 0 auto; padding: 65px 3px 0 2px; background: #cdcdcd; }
.lb-thumb i { display: block; height: 9px; background: #f2f2f2; }
.code-field { position: relative; }
.text-caret { position: absolute; left: 155px; top: 3px; width: 1px; height: 15px; background: #000; }
#code { display: block; width: 100%; height: 21px; padding: 0 3px; border: 1px solid #569de5; background: #fff; color: #000; outline: 0; }
.note { margin: 8px 0 7px; }
.check { display: flex; align-items: center; gap: 4px; }
.check input { appearance: none; width: 13px; height: 13px; margin: 0; border: 1px solid #333; background: #fff; display: grid; place-items: center; }
.check input:checked::before { content: ""; width: 8px; height: 4px; border: solid #333; border-width: 0 0 1px 1px; transform: rotate(-45deg); margin-top: -2px; }
dl { display: grid; grid-template-columns: 55px 1fr; gap: 4px 0; margin: auto 0 0; padding-right: 1px; }
dd { margin: 0; white-space: nowrap; }
.preview { display: grid; place-items: center; height: 39px; border: 1px solid #999ea6; background: #fff; }
.actions { display: flex; justify-content: flex-end; gap: 7px; padding: 11px 6px 7px; }
.actions button { width: 77px; height: 29px; border: 1px solid #bbb; background: #e1e1e1; }
.actions .ok { border: 2px solid #0078d7; }

/* step markers over the window */
.notes { position: absolute; left: 0; top: 0; pointer-events: none; }
.shade { filter: drop-shadow(2px 3px 2px rgba(0, 0, 0, .4)); }
.badge { position: absolute; width: 45px; height: 43px; background: #000; color: #fff; font: bold 32px/43px "DejaVu Sans", sans-serif; text-align: center; box-shadow: 3px 3px 4px rgba(0, 0, 0, .5); }
.b1 { left: 244px; top: 138px; }
.b2 { left: 884px; top: 13px; }
.b3 { left: 908px; top: 73px; }
.b4 { left: 441px; top: 569px; }
.b5 { left: 857px; top: 382px; }
.b6 { left: 877px; top: 481px; }
```
